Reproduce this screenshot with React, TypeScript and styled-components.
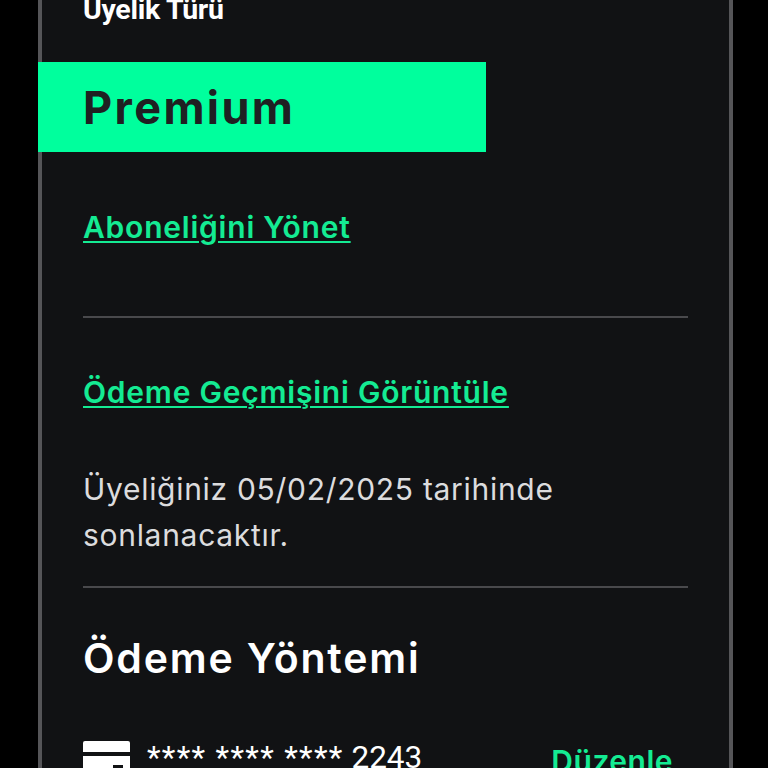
import React from "react";
import styled, { createGlobalStyle } from "styled-components";

const Global = createGlobalStyle`
  html, body { margin: 0; padding: 0; background: #000; height: 768px; overflow: hidden; }
  #root { height: 768px; overflow: hidden; }
`;
const Panel = styled.main`
  box-sizing: border-box;
  width: 695px;
  height: 768px;
  margin-left: 38px;
  background: #111214;
  box-shadow: inset 4px 0 0 #555558, inset -4px 0 0 #555558;
  overflow: hidden;
  font-family: Inter, "Noto Sans", sans-serif;
`;
const Column = styled.div`
  display: flex;
  flex-direction: column;
  margin-top: -8px;
  padding: 0 44px 0 45px;
`;
const TypeLabel = styled.h2`
  margin: 0;
  height: 36px;
  font: 700 28.5px/36px Roboto, sans-serif;
  color: #fff;
  letter-spacing: -0.3px;
  white-space: nowrap;
`;
const PlanBanner = styled.div`
  box-sizing: border-box;
  width: 448px;
  height: 90px;
  margin: 34px 0 0 -45px;
  padding-left: 45px;
  background: #00ff9d;
  color: #1f2022;
  display: flex;
  align-items: center;
  font-weight: 700;
  font-size: 45px;
  letter-spacing: 2.4px;
`;
const Action = styled.a<{ $top: number }>`
  margin-top: ${(p) => p.$top}px;
  align-self: flex-start;
  color: #14eb93;
  font-size: 30px;
  line-height: 40px;
  font-weight: 600;
  letter-spacing: 0.78px;
  text-decoration: underline;
  text-decoration-thickness: 2px;
  text-underline-offset: 3px;
`;
const Rule = styled.hr<{ $top: number }>`
  width: 605px;
  margin: ${(p) => p.$top}px 0 0;
  border: 0;
  height: 2px;
  background: #49494c;
`;
const Notice = styled.p`
  margin: 54px 0 0;
  width: 600px;
  color: #dcdcde;
  font-size: 30px;
  letter-spacing: 0.7px;
  line-height: 46px;
`;
const MethodTitle = styled.h2`
  margin: 42px 0 0;
  color: #fff;
  font-size: 41px;
  letter-spacing: 1.8px;
  line-height: 56px;
  font-weight: 600;
`;
const CardRow = styled.div`
  display: flex;
  align-items: flex-start;
  margin-top: 55px;
  width: 605px;
`;
const CardIcon = styled.svg`
  width: 47px;
  height: 40px;
  flex: none;
`;
const CardNumber = styled.span`
  margin-left: 17px;
  color: #fff;
  font: 400 31.5px/34px Roboto, sans-serif;
  white-space: pre;
`;
const Stars = styled.span`
  letter-spacing: 1.3px;
`;
const Edit = styled.span`
  margin-left: auto;
  margin-right: 15px;
  color: #14eb93;
  font: 600 30px/40px Inter, sans-serif;
  letter-spacing: 0.5px;
`;

export default function App() {
  return (
    <>
      <Global />
      <Panel>
        <Column>
          <TypeLabel>Üyelik Türü</TypeLabel>
          <PlanBanner>Premium</PlanBanner>
          <Action $top={55}>Aboneliğini Yönet</Action>
          <Rule $top={69} />
          <Action $top={54}>Ödeme Geçmişini Görüntüle</Action>
          <Notice>Üyeliğiniz 05/02/2025 tarihinde sonlanacaktır.</Notice>
          <Rule $top={28} />
          <MethodTitle>Ödeme Yöntemi</MethodTitle>
          <CardRow>
            <CardIcon viewBox="0 0 47 40">
              <path fill="#fff" d="M2 0h43a2 2 0 0 1 2 2v9H0V2a2 2 0 0 1 2-2z" />
              <path fill="#fff" d="M0 15h47v25H0z" />
              <path fill="#111214" d="M30 24h10v7H30z" />
            </CardIcon>
            <CardNumber><Stars>**** **** ****</Stars> 2243</CardNumber>
            <Edit>Düzenle</Edit>
          </CardRow>
        </Column>
      </Panel>
    </>
  );
}
